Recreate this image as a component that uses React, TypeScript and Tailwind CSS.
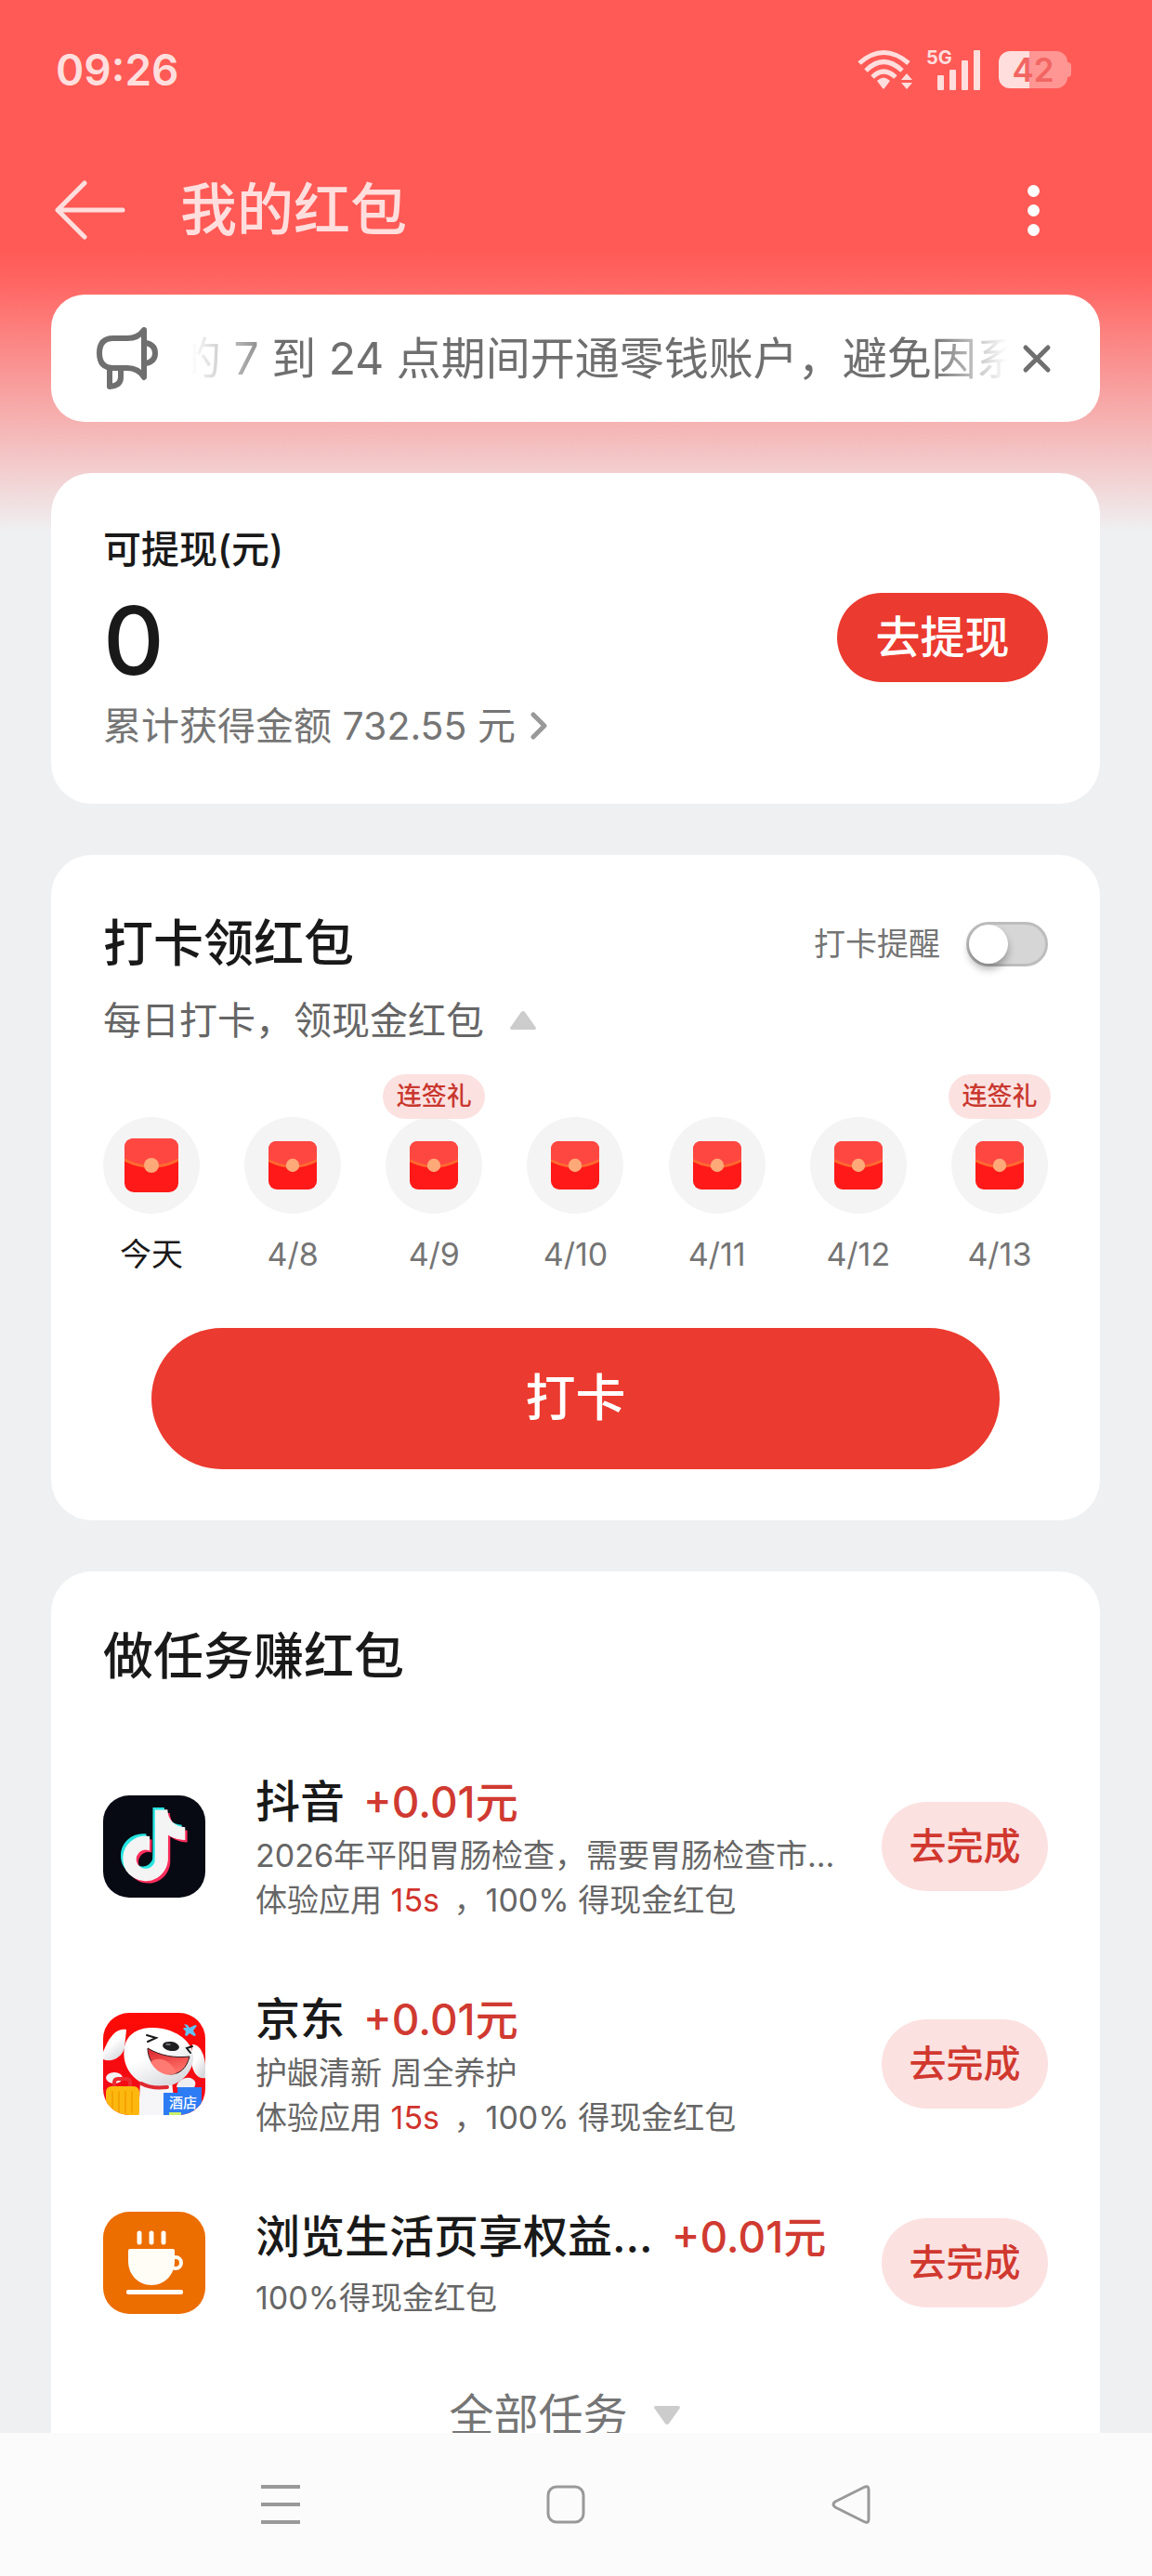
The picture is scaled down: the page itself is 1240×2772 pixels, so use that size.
import { useState } from "react";

type Task = {
  name: string;
  reward: string;
  icon: React.ReactNode;
  description?: string;
  seconds?: string;
  note: string;
};

const days = [
  { label: "今天", today: true, gift: false },
  { label: "4/8", today: false, gift: false },
  { label: "4/9", today: false, gift: true },
  { label: "4/10", today: false, gift: false },
  { label: "4/11", today: false, gift: false },
  { label: "4/12", today: false, gift: false },
  { label: "4/13", today: false, gift: true },
];

const notePath =
  "M12.525.02c1.31-.02 2.61-.01 3.91-.02.08 1.53.63 3.09 1.75 4.17 1.12 1.11 2.7 1.62 4.24 1.79v4.03c-1.44-.05-2.89-.35-4.2-.97-.57-.26-1.1-.59-1.62-.93-.01 2.92.01 5.84-.02 8.75-.08 1.4-.54 2.79-1.35 3.94-1.31 1.92-3.58 3.17-5.91 3.21-1.43.08-2.86-.31-4.08-1.03-2.02-1.19-3.44-3.37-3.65-5.71-.02-.5-.03-1-.01-1.49.18-1.9 1.12-3.72 2.58-4.96 1.66-1.44 3.98-2.13 6.15-1.72.02 1.48-.04 2.96-.04 4.44-.99-.32-2.15-.23-3.02.37-.63.41-1.11 1.04-1.36 1.75-.21.51-.15 1.07-.14 1.61.24 1.64 1.82 3.02 3.5 2.87 1.12-.01 2.19-.66 2.77-1.61.19-.33.4-.67.41-1.06.1-1.79.06-3.57.07-5.36.01-4.03-.01-8.05.02-12.07z";

const DouyinIcon = () => (
  <svg viewBox="0 0 110 110" className="size-full" aria-hidden="true">
    <rect width="110" height="110" fill="#070913" />
    <path d={notePath} fill="#25e4e0" transform="translate(14 13) scale(3.15)" />
    <path d={notePath} fill="#fb2d5b" transform="translate(20 19) scale(3.15)" />
    <path d={notePath} fill="#f4f4f4" stroke="#f4f4f4" strokeWidth="0.4" transform="translate(17 16) scale(3.15)" />
  </svg>
);

const JdIcon = () => (
  <svg viewBox="0 0 110 110" className="size-full" aria-hidden="true">
    <defs>
      <linearGradient id="jd-bg" x1="0" y1="0" x2="0" y2="1">
        <stop offset="0" stopColor="#fd0b05" />
        <stop offset="1" stopColor="#f00b1c" />
      </linearGradient>
      <linearGradient id="jd-dog" x1="0" y1="0" x2="0.6" y2="1">
        <stop offset="0.5" stopColor="#ffffff" />
        <stop offset="1" stopColor="#d9dade" />
      </linearGradient>
      <linearGradient id="jd-mouth" x1="0" y1="0" x2="0.4" y2="1">
        <stop offset="0" stopColor="#d8232d" />
        <stop offset="1" stopColor="#ff6f66" />
      </linearGradient>
    </defs>
    <rect width="110" height="110" fill="url(#jd-bg)" />
    <path d="M40 74h34l4 36H38z" fill="#f6f6f8" />
    <path d="M25 18C12 15 4 32 0 42v8c9 4 20-2 23-12z" fill="url(#jd-dog)" />
    <path d="M96 34c9-1 14 14 14 24v12c-8 2-14-6-15-18z" fill="url(#jd-dog)" />
    <ellipse cx="12" cy="70" rx="9" ry="6" fill="#f4f4f6" />
    <path d="M79 80c0-6 10-13 17-9 5 3 4 8 0 11z" fill="#eeeef1" />
    <path d="M23 37C27 17 47 14 64 17c24 5 35 21 33 34-3 20-22 30-40 29C35 78 19 59 23 37z" fill="url(#jd-dog)" />
    <path d="M47 24l10 3-9 4M96 36l-6 2 4 5" fill="none" stroke="#191919" strokeWidth="2" strokeLinecap="round" />
    <path d="M48 38c13 8 29 11 45 9-3 12-10 19-20 19C58 64 48 52 48 38z" fill="url(#jd-mouth)" stroke="#30191b" strokeWidth="1" />
    <path d="M51 53c9-7 22-2 28 12-12 5-22-2-28-12z" fill="#ff7a72" />
    <ellipse cx="73" cy="36" rx="9" ry="5" fill="#1f1f22" transform="rotate(8 73 36)" />
    <ellipse cx="70" cy="34" rx="3" ry="1" fill="#77777d" />
    <path d="M41 76c9 5 19 5 28 4" fill="none" stroke="#df2931" strokeWidth="4" strokeLinecap="round" />
    <path d="M12 80v-5q0-4 4-4h9q4 0 4 4v5" fill="none" stroke="#ec2b31" strokeWidth="4" />
    <rect x="3" y="79" width="36" height="34" rx="6" fill="#fdb80f" />
    <path d="M10 85v22M17 85v22M24 85v22M31 85v22" stroke="#f5a300" strokeWidth="2" strokeLinecap="round" />
    <path d="M65 86h15v-6h26v30H65z" fill="#2e7cf4" />
    <rect x="71" y="107" width="13" height="3" fill="#c9f06a" />
    <path d="M87 12l4 1 2 3 6-3 2 1-4 5 3 5-2 1-5-3-3 3-2-1 1-4-3-3 1-1 3 0z" fill="#61c3f5" />
    <text x="86" y="102" textAnchor="middle" fontSize="15" fontWeight="500" fill="#ffffff">
      酒店
    </text>
  </svg>
);

const CoffeeIcon = () => (
  <svg viewBox="0 0 110 110" className="size-full" aria-hidden="true">
    <rect width="110" height="110" fill="#ec6d00" />
    <path d="M39 23v10M52 23v10M65 23v10" stroke="#fffdf5" strokeWidth="5" strokeLinecap="round" />
    <path d="M29 40h46q2 0 2 2v11c0 15-11 26-25 26S27 68 27 53V42q0-2 2-2z" fill="#fffdf5" />
    <circle cx="78" cy="55" r="6" fill="none" stroke="#fffdf5" strokeWidth="4" />
    <rect x="25" y="84" width="61" height="5" rx="2" fill="#fffdf5" />
  </svg>
);

const tasks: Task[] = [
  {
    name: "抖音",
    reward: "+0.01元",
    icon: <DouyinIcon />,
    description: "2026年平阳胃肠检查，需要胃肠检查市...",
    seconds: "15s",
    note: "100% 得现金红包",
  },
  {
    name: "京东",
    reward: "+0.01元",
    icon: <JdIcon />,
    description: "护龈清新 周全养护",
    seconds: "15s",
    note: "100% 得现金红包",
  },
  {
    name: "浏览生活页享权益...",
    reward: "+0.01元",
    icon: <CoffeeIcon />,
    note: "100%得现金红包",
  },
];

const RedPacket = ({ className }: { className: string }) => (
  <svg viewBox="0 0 58 58" className={className} aria-hidden="true">
    <rect width="58" height="58" rx="10" fill="#ff1919" />
    <path d="M0 24V10Q0 0 10 0H48Q58 0 58 10V24Q29 37 0 24Z" fill="#ff4742" />
    <path d="M0 23Q29 38 58 23" fill="none" stroke="#ff6a2f" strokeWidth="3" />
    <circle cx="29" cy="29" r="8" fill="#ffa878" />
  </svg>
);

const StatusBar = () => (
  <div className="flex h-[150px] items-center justify-between pl-[60px] pr-[87px] text-[#ffdedd]">
    <span className="text-[46px] font-semibold leading-none">09:26</span>
    <div className="flex items-center">
      <svg viewBox="0 0 60 44" className="h-11 w-[60px]" aria-hidden="true">
        <g fill="none" stroke="currentColor" strokeWidth="5">
          <path d="M2 15Q28 -8 55 15" />
          <path d="M9 23Q28 4 48 23" />
          <path d="M16 30Q28 18 41 30" />
        </g>
        <path d="M21 34q7-7 14 0l-6 8q-1 1-2 0z" fill="currentColor" />
        <path d="M53 26l6 7H47zM53 43l6-7H47z" fill="currentColor" />
      </svg>
      <div className="relative ml-4 mr-5">
        <span className="absolute -left-0.5 top-0 text-[20px] font-bold leading-[18px]">5G</span>
        <svg viewBox="0 0 56 44" className="h-11 w-14" fill="currentColor" aria-hidden="true">
          <rect x="10" y="28" width="7" height="16" rx="1" />
          <rect x="23" y="22" width="7" height="22" rx="1" />
          <rect x="36" y="12" width="7" height="32" rx="1" />
          <rect x="49" y="1" width="7" height="43" rx="1" />
        </svg>
      </div>
      <div className="flex items-center">
        <span className="flex h-10 w-[74px] items-center justify-center rounded-xl bg-linear-to-r from-[#ffdedd] from-45% to-[#ff9693] to-45% text-[35px] font-semibold leading-none text-[#f26562]">
          42
        </span>
        <span className="h-4 w-1 rounded-r-sm bg-[#ff9693]" />
      </div>
    </div>
  </div>
);

const Header = () => (
  <header className="flex h-[152px] items-center pl-[58px] pr-[108px]">
    <button type="button" aria-label="返回" className="text-[#ffdedd]">
      <svg viewBox="0 0 78 64" className="h-16 w-[78px]" fill="none" stroke="currentColor" strokeWidth="5" strokeLinecap="round" strokeLinejoin="round" aria-hidden="true">
        <path d="M33 3L4 32l29 29M4 32h70" />
      </svg>
    </button>
    <h1 className="ml-[58px] flex-1 text-[61px] font-medium leading-none text-[#ffdedd]">我的红包</h1>
    <button type="button" aria-label="更多" className="flex w-10 flex-col items-center gap-2">
      <span className="size-[13px] rounded-full bg-white" />
      <span className="size-[13px] rounded-full bg-white" />
      <span className="size-[13px] rounded-full bg-white" />
    </button>
  </header>
);

const Notice = ({ onClose }: { onClose: () => void }) => (
  <section className="flex h-[137px] items-center rounded-[36px] bg-white pl-[49px] pr-[52px] text-[#6f6f6f]">
    <svg viewBox="0 0 66 68" className="h-[68px] w-[66px] shrink-0" fill="none" stroke="currentColor" strokeWidth="6" strokeLinejoin="round" aria-hidden="true">
      <path d="M33 12H18Q3 12 3 28Q3 44 18 44H33Q45 44 51 54V3Q45 12 33 12Z" />
      <path d="M14 45V64Q26 63 26 54V45" />
      <path d="M53 17Q63 19 63 28Q63 37 53 39" />
    </svg>
    <div className="ml-5 min-w-0 flex-1 overflow-hidden mask-[linear-gradient(to_right,transparent_16px,black_110px,black_calc(100%-90px),transparent_calc(100%-8px))]">
      <p className="whitespace-nowrap text-[48px] leading-[64px]">的 7 到 24 点期间开通零钱账户，避免因系统</p>
    </div>
    <button type="button" aria-label="关闭" onClick={onClose} className="ml-2">
      <svg viewBox="0 0 32 32" className="size-8" fill="none" stroke="currentColor" strokeWidth="5" strokeLinecap="round" aria-hidden="true">
        <path d="M4 4l24 24M28 4L4 28" />
      </svg>
    </button>
  </section>
);

const Balance = () => (
  <section className="flex items-center justify-between rounded-[44px] bg-white px-14 pt-14 pb-[58px]">
    <div>
      <h2 className="text-[41px] font-medium leading-[52px] text-[#191919]">可提现(元)</h2>
      <p className="mt-5 text-[102px] font-medium leading-[104px] text-[#191919]">0</p>
      <a href="#records" className="mt-3.5 flex items-center gap-4 text-[41px] leading-[52px] text-[#757575]">
        累计获得金额 732.55 元
        <svg viewBox="0 0 18 30" className="h-[30px] w-[18px]" fill="none" stroke="#999999" strokeWidth="5" strokeLinecap="round" strokeLinejoin="round" aria-hidden="true">
          <path d="M3 3l12 12L3 27" />
        </svg>
      </a>
    </div>
    <button type="button" className="h-24 w-[227px] rounded-full bg-[#eb3a2f] text-[48px] font-medium leading-none text-white">
      去提现
    </button>
  </section>
);

const CheckIn = () => {
  const [remind, setRemind] = useState(false);

  return (
    <section className="rounded-[44px] bg-white px-14 pt-14 pb-[55px]">
      <div className="flex h-20 items-center justify-between">
        <h2 className="text-[54px] font-medium leading-[80px] text-[#191919]">打卡领红包</h2>
        <label className="flex items-center gap-7 text-[34px] leading-[48px] text-[#757575]">
          打卡提醒
          <input
            type="checkbox"
            role="switch"
            checked={remind}
            onChange={(e) => setRemind(e.target.checked)}
            className="h-12 w-[88px] appearance-none rounded-full border-[3px] border-[#bdbdbd] bg-[#d6d6d6] before:block before:size-[42px] before:rounded-full before:bg-white before:shadow-[0_6px_8px_rgba(0,0,0,0.3)] checked:bg-[#eb3a2f] checked:before:ml-10"
          />
        </label>
      </div>
      <button type="button" className="mt-4 flex items-center gap-7 text-[41px] leading-[52px] text-[#666666]">
        每日打卡，领现金红包
        <svg viewBox="0 0 28 20" className="h-5 w-7" fill="#cccccc" aria-hidden="true">
          <path d="M12 1q2-2 4 0l12 17q0 2-2 2H2q-2 0-2-2z" />
        </svg>
      </button>
      <ul className="mt-[78px] flex justify-between">
        {days.map((day) => (
          <li key={day.label} className="relative flex w-[104px] flex-col items-center">
            {day.gift && (
              <span className="absolute -top-[46px] flex h-12 w-[110px] items-center justify-center rounded-full bg-[#fce1e1] text-[27px] font-medium text-[#c9382f]">
                连签礼
              </span>
            )}
            <div className="grid size-[104px] place-items-center rounded-full bg-[#f4f4f4]">
              <RedPacket className={day.today ? "size-[58px]" : "size-[52px]"} />
            </div>
            <span className={`mt-5 text-[34px] leading-[48px] ${day.today ? "text-[#191919]" : "text-[#757575]"}`}>{day.label}</span>
          </li>
        ))}
      </ul>
      <div className="mt-[55px] px-[52px]">
        <button type="button" className="h-[152px] w-full rounded-full bg-[#eb3a2f] text-[54px] font-medium leading-none text-white">
          打卡
        </button>
      </div>
    </section>
  );
};

const TaskRow = ({ task }: { task: Task }) => (
  <li className="flex items-center">
    <div className="size-[110px] shrink-0 overflow-hidden rounded-[28px]">{task.icon}</div>
    <div className="ml-[54px] min-w-0 flex-1 whitespace-nowrap text-[34px] leading-[48px] text-[#666666]">
      <div className="flex items-center gap-5 text-[48px] font-medium leading-[68px]">
        <h3 className="text-[#191919]">{task.name}</h3>
        <span className="text-[46px] text-[#d03a31]">{task.reward}</span>
      </div>
      {task.description && <p>{task.description}</p>}
      {task.seconds ? (
        <p>
          体验应用 <span className="mr-1.5 text-[#d0332c]">{task.seconds}</span> ，{task.note}
        </p>
      ) : (
        <p className="mt-2">{task.note}</p>
      )}
    </div>
    <button type="button" className="h-24 w-[179px] shrink-0 rounded-full bg-[#fce1e1] text-[40px] font-medium leading-none text-[#d0382f]">
      去完成
    </button>
  </li>
);

const TaskList = () => (
  <section className="rounded-[44px] bg-white px-14 pt-14 pb-14">
    <h2 className="text-[54px] font-medium leading-[72px] text-[#191919]">做任务赚红包</h2>
    <ul className="mt-[86px] space-y-[70px]">
      {tasks.map((task) => (
        <TaskRow key={task.name} task={task} />
      ))}
    </ul>
    <button type="button" className="mx-auto mt-[70px] flex items-center gap-7 pr-6 text-[48px] leading-[64px] text-[#757575]">
      全部任务
      <svg viewBox="0 0 28 20" className="h-5 w-7" fill="#cccccc" aria-hidden="true">
        <path d="M12 19q2 2 4 0L28 2q0-2-2-2H2Q0 0 0 2z" />
      </svg>
    </button>
  </section>
);

const SystemNav = () => (
  <nav className="grid h-[154px] shrink-0 grid-cols-3 place-items-center bg-[#fbfbfb] pl-[148px] pr-[170px] text-[#999999]">
    <button type="button" aria-label="最近任务">
      <svg viewBox="0 0 42 42" className="size-[42px]" stroke="currentColor" strokeWidth="4" aria-hidden="true">
        <path d="M0 2h42M0 21h42M0 40h42" />
      </svg>
    </button>
    <button type="button" aria-label="主屏幕">
      <svg viewBox="0 0 42 42" className="size-[42px]" fill="none" stroke="currentColor" strokeWidth="3" aria-hidden="true">
        <rect x="2" y="2" width="38" height="38" rx="9" />
      </svg>
    </button>
    <button type="button" aria-label="返回上一页">
      <svg viewBox="0 0 42 42" className="size-[42px]" fill="none" stroke="currentColor" strokeWidth="3" strokeLinejoin="round" aria-hidden="true">
        <path d="M35 2.500Q40 0 40 5V37Q40 42 35 39.500L4 24Q0 21 4 18Z" />
      </svg>
    </button>
  </nav>
);

export default function App() {
  const [noticeOpen, setNoticeOpen] = useState(true);

  return (
    <div className="flex h-screen flex-col bg-[#eff0f2] bg-[linear-gradient(to_bottom,#ff5a56_0,#ff5a56_270px,#ff6663_305px,#f5b5b5_460px,#eff0f2_572px)] font-['Inter','Noto_Sans_CJK_SC',sans-serif]" lang="zh-CN">
      <StatusBar />
      <Header />
      <main className="min-h-0 flex-1 space-y-[55px] overflow-y-auto pl-[55px] pr-14 pt-[15px] [scrollbar-width:none]">
        {noticeOpen && <Notice onClose={() => setNoticeOpen(false)} />}
        <Balance />
        <CheckIn />
        <TaskList />
      </main>
      <SystemNav />
    </div>
  );
}
